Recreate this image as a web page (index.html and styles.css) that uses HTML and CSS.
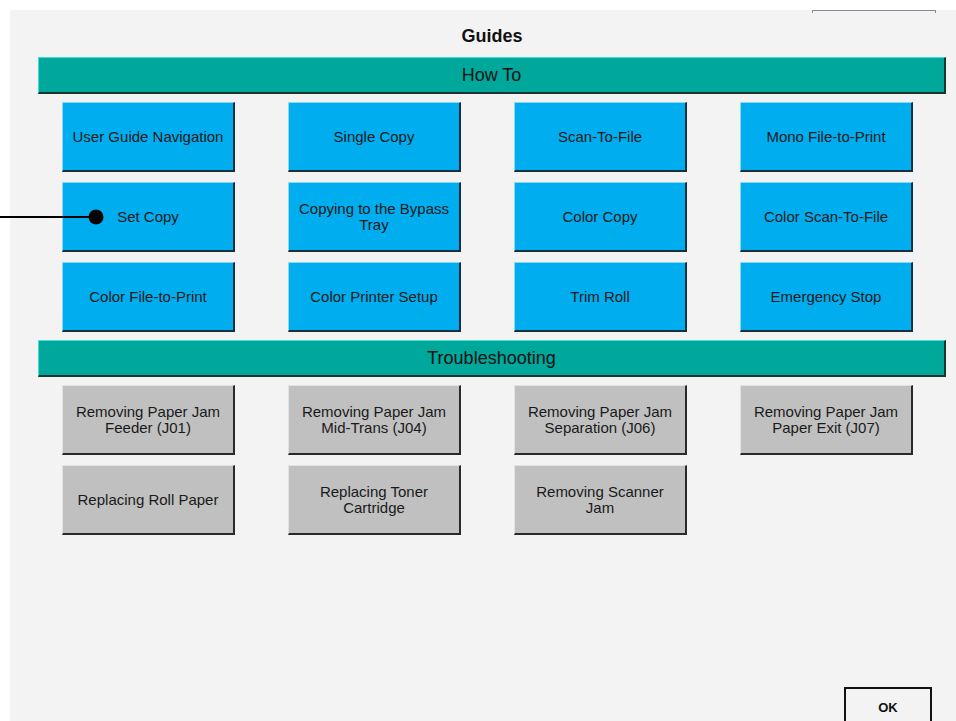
FILE: index.html
```html
<!DOCTYPE html>
<html lang="en">
<head>
  <meta charset="UTF-8">
  <title>Guides</title>
  <link rel="stylesheet" href="styles.css">
</head>
<body>
  <div class="tab-edge"></div>
  <div class="panel">
    <h1 class="title">Guides</h1>

    <div class="section-bar">How To</div>
    <div class="grid">
      <button class="guide blue">User Guide Navigation</button>
      <button class="guide blue">Single Copy</button>
      <button class="guide blue">Scan-To-File</button>
      <button class="guide blue">Mono File-to-Print</button>
      <button class="guide blue">Set Copy</button>
      <button class="guide blue">Copying to the Bypass<br>Tray</button>
      <button class="guide blue">Color Copy</button>
      <button class="guide blue">Color Scan-To-File</button>
      <button class="guide blue">Color File-to-Print</button>
      <button class="guide blue">Color Printer Setup</button>
      <button class="guide blue">Trim Roll</button>
      <button class="guide blue">Emergency Stop</button>
    </div>

    <div class="section-bar">Troubleshooting</div>
    <div class="grid">
      <button class="guide grey">Removing Paper Jam<br>Feeder (J01)</button>
      <button class="guide grey">Removing Paper Jam<br>Mid-Trans (J04)</button>
      <button class="guide grey">Removing Paper Jam<br>Separation (J06)</button>
      <button class="guide grey">Removing Paper Jam<br>Paper Exit (J07)</button>
      <button class="guide grey">Replacing Roll Paper</button>
      <button class="guide grey">Replacing Toner<br>Cartridge</button>
      <button class="guide grey">Removing Scanner<br>Jam</button>
    </div>

    <div class="footer">
      <button class="ok">OK</button>
    </div>
  </div>

  <svg class="callout" width="110" height="16" viewBox="0 0 110 16">
    <line x1="0" y1="8" x2="96" y2="8" stroke="#000" stroke-width="2"/>
    <circle cx="96" cy="8" r="7.5" fill="#000"/>
  </svg>
</body>
</html>
```

FILE: styles.css
```css
html, body {
  margin: 0;
  height: 100%;
  overflow: hidden;
}
body {
  background: #fff;
  font-family: "Liberation Sans", Arial, sans-serif;
  color: #1a1a1a;
  position: relative;
}
.panel {
  margin: 10px 0 0 10px;
  height: 740px;
  background: #f3f3f3;
  padding: 0 10px 0 28px;
  box-sizing: border-box;
}
.title {
  margin: 0;
  height: 47px;
  line-height: 52px;
  font-size: 18px;
  font-weight: bold;
  text-align: center;
  color: #111;
}
.section-bar {
  height: 37px;
  box-sizing: border-box;
  background: #00a79b;
  border-top: 1px solid #3fe3d6;
  border-left: 1px solid #3fe3d6;
  border-right: 2px solid #1d3432;
  border-bottom: 2px solid #1d3432;
  text-align: center;
  font-size: 18px;
  line-height: 35px;
  color: #111;
}
.grid {
  display: grid;
  grid-template-columns: repeat(4, 173px);
  column-gap: 53px;
  row-gap: 10px;
  padding: 8px 0 8px 24px;
}
.guide {
  height: 70px;
  box-sizing: border-box;
  font-family: "Liberation Sans", Arial, sans-serif;
  font-size: 15px;
  line-height: 16px;
  color: #1a1a1a;
  text-align: center;
  padding: 0 2px;
  border-style: solid;
  border-width: 1px 2px 2px 1px;
  cursor: pointer;
}
.blue {
  background: #00adef;
  border-color: #8ad8f6 #13303c #13303c #8ad8f6;
}
.grey {
  background: #c0c0c0;
  border-color: #e2e2e2 #2a2a2a #2a2a2a #e2e2e2;
}
.footer {
  display: flex;
  justify-content: flex-end;
  padding: 144px 14px 0 0;
}
.ok {
  width: 88px;
  height: 44px;
  background: #f3f3f3;
  border: 2px solid #111;
  font-family: "Liberation Sans", Arial, sans-serif;
  font-size: 13px;
  font-weight: bold;
  color: #111;
  padding: 0 0 4px 0;
}
.tab-edge {
  position: absolute;
  top: 10px;
  left: 812px;
  width: 122px;
  height: 2px;
  border-top: 1px solid #8a8a98;
  border-left: 1px solid #8a8a98;
  border-right: 1px solid #8a8a98;
}
.callout {
  position: absolute;
  top: 209px;
  left: 0;
}
```
